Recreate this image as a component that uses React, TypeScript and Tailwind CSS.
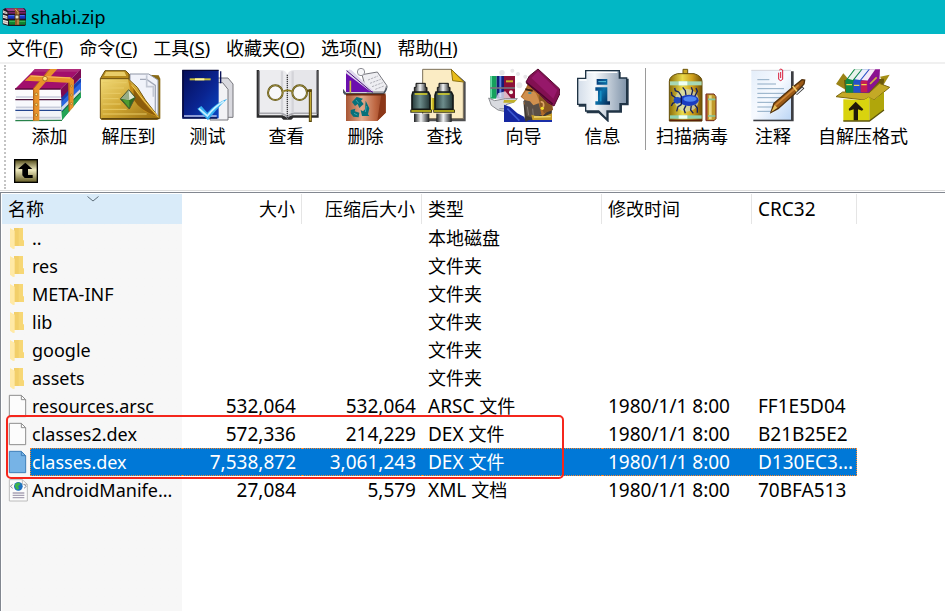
import type { ReactNode } from "react";

function BooksArt() {
  return (
    <>
      <path d="M181 318 L241 256 L243 292 L186 360Z" fill="#0f6b35" />
      <path d="M183 340 L243 278 L243 292 L186 361Z" fill="#23a455" />
      <path d="M181 292 L243 234 L243 254 L184 318Z" fill="#183fae" />
      <path d="M186 304 L243 246 L243 270 L186 334Z" fill="#2b66e0" />
      <path d="M184 322 L240 268 L241 276 L184 334Z" fill="#d5dbe6" />
      <path d="M46 328 L184 328 L186 361 L46 362Z" fill="#f2f3f8" />
      <path d="M46 362 L186 361" stroke="#27824a" strokeWidth="4" />
      <path d="M46 300 L184 300 L184 330 L46 330Z" fill="#f7f8fc" />
      <path d="M46 331 L184 331" stroke="#25468f" strokeWidth="4" />
      <path d="M46 268 L182 268 L184 298 L46 298Z" fill="#fbfbfd" />
      <path d="M46 299 L184 299" stroke="#4a1038" strokeWidth="4" />
      <path d="M48 291 H182 M48 322 H182 M48 353 H182" stroke="#c9cddb" strokeWidth="5" />
      <path d="M105 207 L243 207 L182 267 L45 267Z" fill="#a20f6c" />
      <path d="M105 207 L243 207 L235 215 L97 215Z" fill="#b02c7c" />
      <path d="M182 267 L243 207 L243 232 L184 294Z" fill="#7c0a52" />
      <path d="M45 267 H182" stroke="#5c0a3c" strokeWidth="4" />
      <path d="M148 207 L172 207 L118 268 L118 362 L99 362 L99 268Z" fill="#e8922a" />
      <path d="M101 268 V362" stroke="#b8661a" strokeWidth="4" />
      <path d="M150 207 L100 266" stroke="#b8661a" strokeWidth="3" />
      <path d="M92 226 L212 232 L222 240 L220 322 L207 335 L205 248 L74 242Z" fill="#e8922a" />
      <path d="M207 248 V334" stroke="#a85812" strokeWidth="3" />
      <path d="M92 228 L210 234" stroke="#f7bd62" strokeWidth="3" />
      <circle cx="135" cy="236" r="7" fill="#ffe27a" stroke="#8b4c0c" strokeWidth="2" />
      <g fill="#ffe98c" stroke="#925a10" strokeWidth="2">
        <circle cx="109" cy="283" r="4" />
        <circle cx="109" cy="314" r="4" />
        <circle cx="109" cy="345" r="4" />
        <circle cx="214" cy="258" r="3" />
        <circle cx="214" cy="285" r="3" />
        <circle cx="214" cy="311" r="3" />
      </g>
    </>
  );
}

function AppIcon() {
  return (
    <svg viewBox="6 24 72 60" className="h-5 w-6 shrink-0" aria-hidden="true">
      <path d="M8 32 L16 27 H72 L78 34 V78 L74 81 H26 L8 76Z" fill="#1d1420" />
      <path d="M16 28 H70 L76 36 H24Z" fill="#9a3f86" />
      <path d="M25 38 H77 V44 H25Z" fill="#7a2064" />
      <path d="M24 48 H76 V59 H24Z" fill="#1434c4" />
      <path d="M26 50 H74" stroke="#5578f0" strokeWidth="3" />
      <path d="M26 64 H77 V77 H28Z" fill="#0d8530" />
      <path d="M28 67 H76" stroke="#3fbf5c" strokeWidth="3" />
      <path d="M9 34 L22 40 V46 L9 42Z M9 47 L22 51 V60 L9 56Z M9 62 L24 66 V77 L9 73Z" fill="#e9e2da" />
      <path d="M10 38 L22 43 M10 52 L22 56 M10 68 L24 72" stroke="#8d7f86" strokeWidth="2" />
      <path d="M42 28 H52 L58 38 V78 H45 V38Z" fill="#8f5a24" />
      <path d="M46 30 L54 40 V76" fill="none" stroke="#d8b06a" strokeWidth="3" />
      <path d="M45 48 H57 V60 H45Z" fill="#e8dfc4" stroke="#4a3010" strokeWidth="3" />
    </svg>
  );
}

function ExtractArt() {
  return (
    <>
      <defs>
        <linearGradient id="gold" x1="0" y1="0" x2="1" y2="1">
          <stop offset="0" stopColor="#f2db79" />
          <stop offset="0.5" stopColor="#cfa632" />
          <stop offset="1" stopColor="#94690d" />
        </linearGradient>
      </defs>
      <path d="M385 222 L476 226 L481 236 L481 356 L385 356Z" fill="#8a6a14" />
      <path d="M390 222 H446 L474 240 V350 L420 300 L390 260Z" fill="#f1f3fa" stroke="#8f96a5" strokeWidth="3" />
      <path d="M420 238 H440 L466 256 V336" fill="none" stroke="#a3a9b8" strokeWidth="4" />
      <path d="M440 226 V260 H460 V290" fill="none" stroke="#c3c8d4" strokeWidth="5" />
      <path d="M301 236 L315 212 H377 L387 222 V236 Z" fill="#b58a1c" stroke="#6b5010" strokeWidth="3" />
      <path d="M318 215 H373 L379 228 H312Z" fill="#e9cd68" />
      <path d="M301 236 H384 L412 262 L436 300 L478 354 L472 358 H304 L301 354Z" fill="url(#gold)" stroke="#76560e" strokeWidth="3" />
      <path d="M384 238 L478 354 L432 334 L396 296Z" fill="#c58d1a" />
      <path d="M400 264 Q430 310 470 348 Q420 332 402 300Z" fill="#8d5d0a" />
      <path d="M394 254 Q428 300 476 352" fill="none" stroke="#f0d060" strokeWidth="3" />
      <path d="M308 248 H380 M308 264 H372 M308 280 H362 M308 296 H356 M308 312 H362 M308 328 H380 M308 342 H440" stroke="#e8cb66" strokeWidth="3" />
      <path d="M304 356 H478" stroke="#5f450b" strokeWidth="4" />
      <path d="M386 269 L406 292 L388 327 L361 297Z" fill="#2f6b20" />
      <path d="M386 269 L404 292 L388 300 L363 296Z" fill="#dfe8d4" />
      <path d="M386 270 L388 300 L363 296Z" fill="#97ad86" />
      <path d="M366 298 L388 301 L388 324Z" fill="#4f9b31" />
      <path d="M386 269 L406 292 L388 327 L361 297Z" fill="none" stroke="#4c5732" strokeWidth="3" />
    </>
  );
}

function TestArt() {
  return (
    <>
      <defs>
        <linearGradient id="navy" x1="0" y1="0" x2="1" y2="1">
          <stop offset="0" stopColor="#050d58" />
          <stop offset="0.55" stopColor="#0a2490" />
          <stop offset="1" stopColor="#0a46c4" />
        </linearGradient>
      </defs>
      <path d="M650 234 H684 L699 252 V352 H650Z" fill="#d9d9df" stroke="#77777d" strokeWidth="3" />
      <path d="M630 248 H668 L684 268 V360 H630Z" fill="#f2f2f5" stroke="#77777d" strokeWidth="3" />
      <path d="M662 214 V250" stroke="#0a1256" strokeWidth="4" />
      <rect x="547" y="211" width="109" height="144" fill="url(#navy)" />
      <path d="M547 211 H656" stroke="#06083a" strokeWidth="4" />
      <path d="M549 211 V352" stroke="#05093f" strokeWidth="5" />
      <path d="M552 348 H650" stroke="#b9c2e8" strokeWidth="5" />
      <path d="M547 354 H652" stroke="#07104e" strokeWidth="4" />
      <rect x="569" y="235" width="63" height="6" fill="#c9bf3a" />
      <rect x="585" y="235" width="28" height="6" fill="#fff7a0" />
      <path d="M592 326 L604 318 L622 338 Q648 308 682 296 Q646 330 624 361Z" fill="#35aef0" />
      <path d="M597 326 L622 348 Q646 318 672 304" fill="none" stroke="#c6efff" strokeWidth="5" />
    </>
  );
}

function ViewArt() {
  return (
    <>
      <path d="M50 30 H58 V166 H128 L140 172 L156 166 H230 V30 H236 V173 H160 L154 179 H130 L124 173 H50Z" fill="#2c2c2e" />
      <path d="M58 30 H126 Q138 32 142 44 V172 Q134 160 120 160 H58Z" fill="#ececef" />
      <path d="M228 30 H160 Q146 32 142 44 V172 Q150 160 164 160 H228Z" fill="#e6e6ea" />
      <path d="M59 160 H122 Q136 162 142 172 Q148 162 162 160 H229" fill="none" stroke="#a8a8ae" strokeWidth="5" />
      <path d="M58 32 V162 M230 32 V162" stroke="#8d8d92" strokeWidth="4" />
      <path d="M126 34 V158 M158 34 V158" stroke="#d4d4d9" strokeWidth="7" />
      <path d="M142 44 V174" stroke="#3b3b3e" strokeWidth="4" strokeDasharray="4 2" />
      <g fill="#f8f8f9" stroke="#5c5014" strokeWidth="6">
        <circle cx="106" cy="98" r="22" />
        <circle cx="179" cy="98" r="22" />
      </g>
      <g fill="none" stroke="#b8a850" strokeWidth="2">
        <circle cx="106" cy="98" r="22" />
        <circle cx="179" cy="98" r="22" />
      </g>
      <path d="M130 94 Q142 88 156 94" fill="none" stroke="#8b7a1d" strokeWidth="5" />
      <path d="M201 92 H215" stroke="#5c4d0c" strokeWidth="7" />
      <path d="M211 88 V188" stroke="#5a480c" strokeWidth="9" />
      <path d="M211 96 V182" stroke="#d8bd3a" strokeWidth="3" />
    </>
  );
}

function DeleteArt() {
  return (
    <>
      <defs>
        <linearGradient id="bin" x1="0" y1="0" x2="1" y2="0">
          <stop offset="0" stopColor="#a85634" />
          <stop offset="0.4" stopColor="#e0a98c" />
          <stop offset="0.75" stopColor="#bd6540" />
          <stop offset="1" stopColor="#8a3a1c" />
        </linearGradient>
      </defs>
      <path d="M366 44 L412 36 L440 76 L434 96 H380Z" fill="#eeeef2" stroke="#77777e" strokeWidth="3" />
      <path d="M384 60 L414 48 M390 70 L422 58 M396 80 L428 68 M406 88 L432 78" stroke="#b0b0b8" strokeWidth="3" strokeDasharray="7 3" />
      <path d="M318 96 V34 L330 29 L400 96Z" fill="#6b0fae" />
      <path d="M318 40 V30 H334 L402 94 H390Z" fill="#dfd8ec" />
      <path d="M320 32 L398 98" stroke="#49107e" strokeWidth="3" />
      <path d="M331 62 V98" stroke="#cfc43a" strokeWidth="5" />
      <circle cx="363" cy="36" r="11" fill="#f6f6f8" stroke="#8f8f96" strokeWidth="3" />
      <path d="M309 86 L318 98 H430 L444 76 L440 90 L432 104 H314 L309 98Z" fill="#4b5560" />
      <path d="M318 102 H432 L437 100 V158 L412 183 H318Z" fill="url(#bin)" />
      <path d="M424 106 H437 V158 L412 183 L418 140Z" fill="#8c3718" />
      <path d="M318 104 H434" stroke="#68290f" strokeWidth="5" />
      <g fill="#08707a">
        <path d="M336 126 L350 111 L369 116 L363 122 L371 132 L358 144 L353 132 L345 138Z" />
        <path d="M377 122 L388 145 L384 163 L388 168 L366 168 L362 150 L369 154 L375 148Z" />
        <path d="M332 150 L346 146 L344 154 L358 158 L356 172 L340 170 L332 160Z" />
      </g>
      <path d="M348 120 L356 130 M379 138 L376 156 M342 160 L352 165" stroke="#3aa6ac" strokeWidth="3" />
    </>
  );
}

function FindArt() {
  return (
    <>
      <defs>
        <linearGradient id="tube" x1="0" y1="0" x2="1" y2="0">
          <stop offset="0" stopColor="#1c1e20" />
          <stop offset="0.45" stopColor="#f2f4f5" />
          <stop offset="1" stopColor="#191b1d" />
        </linearGradient>
        <linearGradient id="lens" x1="0" y1="0" x2="1" y2="0">
          <stop offset="0" stopColor="#243838" />
          <stop offset="0.45" stopColor="#6d8d8c" />
          <stop offset="1" stopColor="#223434" />
        </linearGradient>
      </defs>
      <path d="M553 34 H640 L677 66 V184 H553Z" fill="#4f4f50" />
      <path d="M548 28 H634 L670 64 V176 H548Z" fill="#fbecc4" stroke="#7c705a" strokeWidth="3" />
      <path d="M634 28 L638 62 L671 66Z" fill="#e9bd1c" stroke="#8c7110" strokeWidth="3" />
      <path d="M640 30 H676 V64Z" fill="#fff" />
      <path d="M571 114 H590 V150 H571Z" fill="#bca818" />
      <path d="M575 112 V152" stroke="#f0e35c" strokeWidth="4" />
      <g>
        <path d="M528 70 H556 V82 H561 V98 H523 V82 H528Z" fill="url(#tube)" stroke="#151515" strokeWidth="3" />
        <path d="M519 96 H565 L570 106 V148 H516 V106Z" fill="url(#lens)" stroke="#141818" strokeWidth="5" />
        <path d="M511 149 H576 V158 H511Z" fill="#171707" />
        <path d="M514 153 H574 M524 102 H562" stroke="#dcd121" strokeWidth="4" />
        <path d="M522 161 H568 V188 H522Z" fill="url(#tube)" />
      </g>
      <g>
        <path d="M597 70 H625 V82 H630 V98 H592 V82 H597Z" fill="url(#tube)" stroke="#151515" strokeWidth="3" />
        <path d="M588 96 H634 L639 106 V148 H585 V106Z" fill="url(#lens)" stroke="#141818" strokeWidth="5" />
        <path d="M580 149 H645 V158 H580Z" fill="#171707" />
        <path d="M582 153 H643 M593 102 H629" stroke="#dcd121" strokeWidth="4" />
        <path d="M589 161 H635 V188 H589Z" fill="url(#tube)" />
      </g>
    </>
  );
}

function WizardArt() {
  return (
    <>
      <g fill="#e6e6e8">
        <circle cx="66" cy="38" r="8" />
        <circle cx="97" cy="32" r="6" />
        <circle cx="114" cy="42" r="6" />
        <circle cx="136" cy="50" r="6" />
        <circle cx="118" cy="76" r="9" />
      </g>
      <path d="M31 48 H50 V116 H31Z" fill="#16a05c" />
      <path d="M34 48 V112" stroke="#5fdda0" strokeWidth="4" />
      <path d="M50 48 H72 V116 H50Z" fill="#151c78" />
      <path d="M61 48 V112" stroke="#5b83e4" strokeWidth="6" />
      <path d="M72 48 H105 V118 H72Z" fill="#8c0f38" />
      <path d="M78 64 H99" stroke="#cbb52c" strokeWidth="6" />
      <path d="M31 84 H105" stroke="#77717c" strokeWidth="5" />
      <circle cx="93" cy="97" r="6" fill="#f8f4e8" />
      <path d="M54 100 L76 94 L94 116 L70 130 L46 122Z" fill="#fff" opacity="0.7" />
      <path d="M26 114 L44 122 L76 116 H112 L100 127 L78 134 L72 154 L54 150 L34 136Z" fill="#d9dbe0" stroke="#8b8d92" strokeWidth="3" />
      <path d="M72 120 H110 L102 128 H70Z" fill="#c2b12a" />
      <path d="M58 146 H78" stroke="#a3a6ac" strokeWidth="4" />
      <path d="M130 122 L148 128 L170 136 L180 164 L216 146 L214 188 H130 L134 170Z" fill="#3f3935" />
      <path d="M72 134 L90 140 L112 160 L132 170 L138 188 H72 Z" fill="#1527a0" />
      <path d="M82 146 L118 182" stroke="#3c58d0" strokeWidth="5" />
      <path d="M146 66 L136 88 L122 110 L134 120 L131 132 L150 142 L188 168 L214 142 L216 108Z" fill="#b06c2a" />
      <path d="M144 84 L168 100 L180 128 L162 140 L138 122 L126 110Z" fill="#d0904e" />
      <path d="M136 88 L158 92" stroke="#3a2410" strokeWidth="6" />
      <path d="M145 99 H154" stroke="#338ba8" strokeWidth="5" />
      <path d="M132 120 L150 124 L160 136 L176 130 L184 162 L166 176 L140 168Z" fill="#5a4f47" />
      <path d="M142 140 L146 166 M158 146 L160 170" stroke="#857a72" strokeWidth="3" />
      <path d="M176 104 L216 120 L219 150 L192 160 L180 136Z" fill="#8a5722" />
      <path d="M182 126 Q194 124 190 142" fill="none" stroke="#e0a867" strokeWidth="5" />
      <circle cx="187" cy="145" r="5" fill="#f0e02d" />
      <path d="M154 164 Q186 176 216 160 V182 H158Z" fill="#c49b28" />
      <path d="M162 171 L212 170" stroke="#f3da70" strokeWidth="4" />
      <path d="M134 188 L146 180 H216 V188Z" fill="#1a2fa8" />
      <path d="M138 66 L148 48 L174 27 L238 86 L240 100 L222 138 L204 128 L178 102 L142 72Z" fill="#821052" stroke="#54082f" strokeWidth="3" />
      <path d="M154 54 L174 34 L232 90 L220 116Z" fill="#96186a" />
      <path d="M140 68 L178 98 L218 132" fill="none" stroke="#4a0729" strokeWidth="4" />
    </>
  );
}

function InfoArt() {
  return (
    <>
      <defs>
        <linearGradient id="bubble" x1="0" y1="0" x2="1" y2="0">
          <stop offset="0" stopColor="#d3dde9" />
          <stop offset="0.35" stopColor="#f5f8fb" />
          <stop offset="1" stopColor="#7f93a9" />
        </linearGradient>
        <linearGradient id="letter" x1="0" y1="0" x2="1" y2="1">
          <stop offset="0" stopColor="#07316e" />
          <stop offset="0.5" stopColor="#0a70a8" />
          <stop offset="1" stopColor="#04204a" />
        </linearGradient>
      </defs>
      <path d="M320 36 H422 V56 H446 V136 H426 V158 H386 V188 L356 160 H320 V140 H296 V58 H320Z" fill="#26384a" />
      <path d="M317 32 H418 V54 H440 V131 H420 V153 H381 V178 L356 153 H317 V133 H293 V55 H317Z" fill="url(#bubble)" stroke="#1f3344" strokeWidth="4" />
      <path d="M322 37 H412 M298 60 H320" stroke="#fff" strokeWidth="4" />
      <path d="M350 57 H382 V74 H350Z M346 82 H382 V124 H390 V134 H346 V124 H354 V92 H346Z" fill="url(#letter)" />
      <path d="M355 65 H378" stroke="#5cc4e0" strokeWidth="3" />
      <path d="M362 92 V124" stroke="#1690c4" strokeWidth="5" />
    </>
  );
}

function ScanArt() {
  return (
    <>
      <defs>
        <linearGradient id="can" x1="0" y1="0" x2="1" y2="0">
          <stop offset="0" stopColor="#8d6d08" />
          <stop offset="0.4" stopColor="#eadb4d" />
          <stop offset="0.7" stopColor="#d0a01c" />
          <stop offset="1" stopColor="#705006" />
        </linearGradient>
      </defs>
      <path d="M609 28 H623 V42 H609Z" fill="#caa72a" stroke="#6e5608" strokeWidth="3" />
      <path d="M568 64 Q568 48 592 41 H642 Q666 48 666 64 V183 H568Z" fill="url(#can)" stroke="#65500a" strokeWidth="3" />
      <path d="M570 64 H665 V76 H570Z" fill="#a7d8b4" />
      <path d="M596 64 H622 V76 H596Z" fill="#effff2" />
      <path d="M570 166 H665 V176 H570Z" fill="#8fd0b0" />
      <path d="M596 166 H622 V176 H596Z" fill="#effff2" />
      <path d="M568 181 H666" stroke="#5a2108" strokeWidth="5" />
      <ellipse cx="620" cy="121" rx="36" ry="34" fill="#cfe0d8" opacity="0.6" />
      <g fill="none" stroke="#15205c" strokeWidth="4">
        <path d="M604 108 L596 96 L586 92 L584 84 M618 106 L616 92 L608 82 M634 106 L638 92 L634 82 M644 110 L652 94 L648 84" />
        <path d="M604 134 L594 140 L590 154 M618 136 L612 148 L616 160 M634 136 L632 150 L640 160 M644 134 L652 144 L652 158" />
        <path d="M588 114 L576 106 L574 96 M588 126 L578 130 L574 138" />
      </g>
      <ellipse cx="627" cy="121" rx="29" ry="17" fill="#1a3cc0" />
      <ellipse cx="592" cy="121" rx="11" ry="10" fill="#1f48c0" />
      <ellipse cx="630" cy="117" rx="20" ry="8" fill="#4e86f4" />
      <path d="M604 108 V134" stroke="#0b1558" strokeWidth="4" />
      <path d="M678 102 H702 L708 110 V176 L702 182 H678Z" fill="#c09a2c" stroke="#6c2414" strokeWidth="3" />
      <path d="M680 104 V181" stroke="#9a4030" strokeWidth="5" />
      <path d="M691 106 V178" stroke="#ead884" strokeWidth="8" />
      <path d="M684 118 H706 M684 168 H706" stroke="#82c69f" strokeWidth="5" />
    </>
  );
}

function CommentArt() {
  return (
    <>
      <defs>
        <linearGradient id="sheet" x1="0" y1="0" x2="1" y2="1">
          <stop offset="0" stopColor="#e4eefa" />
          <stop offset="0.5" stopColor="#f7faff" />
          <stop offset="1" stopColor="#bcd6f5" />
        </linearGradient>
      </defs>
      <path d="M100 34 H221 V184 H100Z" fill="#3c3d42" />
      <rect x="94" y="30" width="119" height="149" fill="url(#sheet)" />
      <path d="M94 31 H213" stroke="#d4d4da" strokeWidth="3" />
      <path d="M112 59 H148 M112 72 H168 M112 86 H192 M112 100 H196 M112 113 H180 M112 127 H176 M112 141 H164 M112 154 H156" stroke="#8fabc4" strokeWidth="3" />
      <path d="M176 38 V58 Q182 66 188 58 V30 Q182 24 178 30 M182 36 V54" fill="none" stroke="#d81e3c" strokeWidth="3" />
      <path d="M153 157 L162 130 L218 82 L246 59 L254 60 L252 72 L230 96 L174 146Z" fill="#9b5a16" stroke="#51300b" strokeWidth="4" />
      <path d="M166 136 L236 75" stroke="#cc8434" strokeWidth="5" />
      <path d="M154 156 L164 134 L172 143Z" fill="#e5bf5b" />
      <path d="M218 78 L232 95" stroke="#f3d070" strokeWidth="5" />
      <path d="M228 102 L250 82" stroke="#333" strokeWidth="9" />
      <path d="M229 101 L248 84" stroke="#f3f3f3" strokeWidth="4" />
    </>
  );
}

function SfxArt() {
  return (
    <>
      <path d="M384 56 L370 40 L348 72 L374 88Z" fill="#9b8316" />
      <path d="M480 50 L509 44 L492 72Z" fill="#a58e15" />
      <path d="M372 60 L492 56 L490 106 L376 104Z" fill="#6b590c" />
      <path d="M368 96 L448 98 L478 70 L509 82 L462 120 L446 112 L432 120 L348 110Z" fill="#c4a926" stroke="#7d680e" strokeWidth="3" />
      <path d="M376 62 L402 28 H428 L400 66 V98 H378Z" fill="#0f8845" />
      <path d="M384 56 L406 28 H424 L398 60Z" fill="#e9f3ec" />
      <path d="M400 64 L428 28 H450 L424 66 V98 H400Z" fill="#2451c8" />
      <path d="M404 58 L428 28 H446 L420 60Z" fill="#edf1fb" />
      <path d="M422 66 L450 28 H480 L478 62 L446 98 H422Z" fill="#8a1090" />
      <path d="M424 60 L450 28 H466 L442 62Z" fill="#f4e9f5" />
      <path d="M422 62 H442 V96 H422Z" fill="#c31c55" />
      <path d="M450 72 L470 52" stroke="#d0b040" strokeWidth="5" />
      <path d="M379 74 H396 M402 76 H418 M424 74 H440" stroke="#f0d84a" strokeWidth="4" />
      <path d="M370 118 L432 120 L446 112 L448 112 V183 H370Z" fill="#d9d30e" />
      <path d="M448 112 L462 120 L492 96 V150 L448 183Z" fill="#b0a60b" />
      <path d="M370 183 H448 L492 150" fill="none" stroke="#5e560b" strokeWidth="4" />
      <path d="M407 125 L430 148 L426 152 L414 148 V181 H401 V148 L388 152 L386 147Z" fill="#20180a" />
    </>
  );
}

function ToolIcon({ box, children }: { box: string; children: ReactNode }) {
  return (
    <svg viewBox={box} className="h-[54px] w-[72px]" aria-hidden="true">
      {children}
    </svg>
  );
}

const mainTools = [
  { label: "添加", box: "42 204 216 162", art: <BooksArt /> },
  { label: "解压到", box: "279 204 216 162", art: <ExtractArt /> },
  { label: "测试", box: "516 204 216 162", art: <TestArt /> },
  { label: "查看", box: "33 24 216 162", art: <ViewArt /> },
  { label: "删除", box: "270 24 216 162", art: <DeleteArt /> },
  { label: "查找", box: "507 24 216 162", art: <FindArt /> },
  { label: "向导", box: "24 24 216 162", art: <WizardArt /> },
  { label: "信息", box: "261 24 216 162", art: <InfoArt /> },
];

const extraTools = [
  { label: "扫描病毒", box: "528 24 216 162", art: <ScanArt />, width: "w-[90px]" },
  { label: "注释", box: "51 24 216 162", art: <CommentArt />, width: "w-[72px]" },
  { label: "自解压格式", box: "321 24 216 162", art: <SfxArt />, width: "w-[108px]" },
];

const menus = [
  ["文件", "F"],
  ["命令", "C"],
  ["工具", "S"],
  ["收藏夹", "O"],
  ["选项", "N"],
  ["帮助", "H"],
];

function ToolButton({ label, box, art, width }: { label: string; box: string; art: ReactNode; width: string }) {
  return (
    <button type="button" className={`flex shrink-0 flex-col items-center ${width}`}>
      <ToolIcon box={box}>{art}</ToolIcon>
      <span className="leading-7 whitespace-nowrap">{label}</span>
    </button>
  );
}

type Kind = "folder" | "file" | "xml";

function RowIcon({ kind, selected }: { kind: Kind; selected: boolean }) {
  if (kind === "folder") {
    return (
      <svg viewBox="6 102 84 84" className="size-7 shrink-0" aria-hidden="true">
        <path d="M42 114 H69 V151 H72 V168 H42Z" fill="#f7d775" />
        <path d="M42 114 H56 V168 H42Z" fill="#efc963" opacity="0.6" />
        <path d="M30 114 L44 122 V176 L39 177 L30 170Z" fill="#ffe9a6" />
      </svg>
    );
  }
  if (kind === "xml") {
    return (
      <svg viewBox="6 273 84 84" className="size-7 shrink-0" aria-hidden="true">
        <path d="M28 284 H67 L82 298 V348 H28Z" fill="#fbfbfb" stroke="#bcbcbc" strokeWidth="3" />
        <path d="M67 284 V298 H82" fill="none" stroke="#bcbcbc" strokeWidth="3" />
        <circle cx="55" cy="304" r="13" fill="#1d6fc2" />
        <path d="M46 296 L56 292 L62 298 L54 304 L58 312 L50 314 L44 304Z" fill="#3db34a" />
        <path d="M38 298 L31 304 L38 310 M72 298 L79 304 L72 310" fill="none" stroke="#8d8d99" strokeWidth="3" />
        <path d="M38 324 H73 M38 331 H73 M38 338 H73" stroke="#a9a2b5" strokeWidth="4" />
      </svg>
    );
  }
  return (
    <svg viewBox="6 21 84 84" className="size-7 shrink-0" aria-hidden="true">
      <path
        d="M28 31 H64 L77 44 V95 H28Z"
        fill={selected ? "#76b3e6" : "#fcfcfc"}
        stroke={selected ? "#3f7fb8" : "#8d8d8d"}
        strokeWidth="3"
      />
      <path d="M64 31 V44 H77" fill="none" stroke={selected ? "#3f7fb8" : "#8d8d8d"} strokeWidth="3" />
    </svg>
  );
}

interface Entry {
  name: string;
  kind: Kind;
  size?: string;
  packed?: string;
  ext?: string;
  type: string;
  date?: string;
  crc?: string;
  selected?: boolean;
}

const entries: Entry[] = [
  { name: "..", kind: "folder", type: "本地磁盘" },
  { name: "res", kind: "folder", type: "文件夹" },
  { name: "META-INF", kind: "folder", type: "文件夹" },
  { name: "lib", kind: "folder", type: "文件夹" },
  { name: "google", kind: "folder", type: "文件夹" },
  { name: "assets", kind: "folder", type: "文件夹" },
  { name: "resources.arsc", kind: "file", size: "532,064", packed: "532,064", ext: "ARSC", type: "文件", date: "1980/1/1 8:00", crc: "FF1E5D04" },
  { name: "classes2.dex", kind: "file", size: "572,336", packed: "214,229", ext: "DEX", type: "文件", date: "1980/1/1 8:00", crc: "B21B25E2" },
  { name: "classes.dex", kind: "file", size: "7,538,872", packed: "3,061,243", ext: "DEX", type: "文件", date: "1980/1/1 8:00", crc: "D130EC3...", selected: true },
  { name: "AndroidManife...", kind: "xml", size: "27,084", packed: "5,579", ext: "XML", type: "文档", date: "1980/1/1 8:00", crc: "70BFA513" },
];

function EntryRow({ entry }: { entry: Entry }) {
  const selected = entry.selected ?? false;
  const edge = selected ? "border-y border-dotted border-[#ff8728] bg-[#0078d7] text-white" : "";
  return (
    <tr className="h-7" aria-selected={selected}>
      <td className="p-0">
        <div className="flex h-7 items-center">
          <RowIcon kind={entry.kind} selected={selected} />
          <span
            className={`flex h-7 flex-1 items-center ${
              selected ? "border-y border-l border-dotted border-[#ff8728] bg-[#0078d7] pl-px text-white" : "pl-0.5"
            }`}
          >
            {entry.name}
          </span>
        </div>
      </td>
      <td className={`px-1.5 py-0 text-right text-[19px] ${edge}`}>{entry.size}</td>
      <td className={`px-1.5 py-0 text-right text-[19px] ${edge}`}>{entry.packed}</td>
      <td className={`px-1.5 py-0 ${edge}`}>
        {entry.ext && <span className="text-[19px]">{entry.ext} </span>}
        {entry.type}
      </td>
      <td className={`px-1.5 py-0 text-[19px] ${edge}`}>{entry.date}</td>
      <td className={`px-1.5 py-0 text-[19px] ${edge} ${selected ? "border-r" : ""}`}>{entry.crc}</td>
    </tr>
  );
}

export default function App() {
  return (
    <div className="flex min-h-screen flex-col overflow-hidden bg-white font-['Noto_Sans','Noto_Sans_CJK_SC',sans-serif] text-[18px] leading-6 text-black">
      <header className="flex h-[34px] items-center gap-[5px] bg-[#02b7c5] pl-0.5">
        <AppIcon />
        <h1>shabi.zip</h1>
      </header>

      <nav className="flex h-[30px] items-center gap-4 border-b-2 border-[#f0f0f0] pl-[7px]">
        {menus.map(([label, key]) => (
          <button key={key} type="button" className="whitespace-nowrap">
            {label}(<span className="underline underline-offset-2">{key}</span>)
          </button>
        ))}
      </nav>

      <div className="flex border-b border-[#dcdcdc]">
        <div className="my-px ml-1 w-0 border-l-2 border-dotted border-[#c4c4c4]" />
        <div className="flex flex-1 flex-col gap-[9px] pt-1 pb-[7px] pl-1">
          <div className="flex">
            {mainTools.map((tool) => (
              <ToolButton key={tool.label} {...tool} width="w-[79px]" />
            ))}
            <div className="mr-px ml-[3px] w-px shrink-0 bg-[#9a9a9a]" />
            {extraTools.map((tool) => (
              <ToolButton key={tool.label} {...tool} />
            ))}
          </div>
          <button type="button" aria-label="向上" className="ml-1 size-6">
            <svg viewBox="42 477 72 72" className="size-6" aria-hidden="true">
              <defs>
                <linearGradient id="olive" x1="0" y1="0" x2="0" y2="1">
                  <stop offset="0" stopColor="#57501f" />
                  <stop offset="0.45" stopColor="#f0ebbf" />
                  <stop offset="1" stopColor="#6b632c" />
                </linearGradient>
              </defs>
              <rect x="42" y="477" width="72" height="72" fill="#000" />
              <rect x="46" y="481" width="64" height="64" fill="url(#olive)" />
              <path d="M76 488 L97 507 H84 V525 H98 V534 H74 L67 526 V507 H54Z" fill="#000" />
            </svg>
          </button>
        </div>
      </div>

      <main className="mt-px flex flex-1 border-t border-l border-t-[#828790] border-l-[#828790] pt-px pl-px">
        <div className="flex-1 bg-linear-to-r from-[#f7f7f7] from-[180px] to-white to-[180px]">
          <div className="relative w-[855px]">
            <table className="w-full table-fixed border-separate border-spacing-0">
              <colgroup>
                <col className="w-[180px]" />
                <col className="w-[120px]" />
                <col className="w-[120px]" />
                <col className="w-[180px]" />
                <col className="w-[150px]" />
                <col className="w-[105px]" />
              </colgroup>
              <thead>
                <tr className="h-[30px] text-left">
                  <th className="relative bg-[#d9ebf9] px-1.5 py-0 font-normal" aria-sort="ascending">
                    名称
                    <svg viewBox="0 0 12 6" className="absolute top-0.5 left-[85px] h-1.5 w-3" aria-hidden="true">
                      <path d="M0.5 0.5 L6 5 L11.5 0.5" fill="none" stroke="#5f6f7c" />
                    </svg>
                  </th>
                  <th className="border-r border-[#e5e5e5] px-1.5 py-0 text-right font-normal">大小</th>
                  <th className="border-r border-[#e5e5e5] px-1.5 py-0 text-right font-normal">压缩后大小</th>
                  <th className="border-r border-[#e5e5e5] px-1.5 py-0 font-normal">类型</th>
                  <th className="border-r border-[#e5e5e5] px-1.5 py-0 font-normal">修改时间</th>
                  <th className="border-r border-[#e5e5e5] px-1.5 py-0 text-[19px] font-normal">CRC32</th>
                </tr>
              </thead>
              <tbody>
                {entries.map((entry) => (
                  <EntryRow key={entry.name} entry={entry} />
                ))}
              </tbody>
            </table>
            <div className="pointer-events-none absolute top-[221px] left-1 h-16 w-[558px] rounded-[5px] border-2 border-[#f5261c]" />
          </div>
        </div>
      </main>
    </div>
  );
}
